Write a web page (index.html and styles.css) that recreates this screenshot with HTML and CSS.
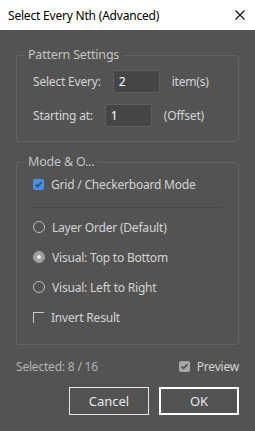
FILE: index.html
```html
<!DOCTYPE html>
<html lang="en">
<head>
    <meta charset="UTF-8">
    <title>Select Every Nth (Advanced)</title>
    <link rel="stylesheet" href="styles.css">
</head>
<body>
    <div class="titlebar">
        <span class="title">Select Every Nth (Advanced)</span>
        <svg class="close" width="10" height="10" viewBox="0 0 10 10">
            <path d="M0.5 0.5 L9.5 9.5 M9.5 0.5 L0.5 9.5" stroke="#111" stroke-width="1.1" fill="none"/>
        </svg>
    </div>

    <div class="content">
        <fieldset class="group">
            <legend>Pattern Settings</legend>
            <div class="field-row">
                <label>Select Every:</label>
                <div class="input">2</div>
                <span>item(s)</span>
            </div>
            <div class="field-row">
                <label>Starting at:</label>
                <div class="input">1</div>
                <span>(Offset)</span>
            </div>
        </fieldset>

        <fieldset class="group mode">
            <legend>Mode &amp; O...</legend>
            <div class="opt first">
                <span class="check on">
                    <svg width="11" height="11" viewBox="0 0 11 11"><path d="M2.5 5.5 L4.5 7.5 L8.5 3.2" stroke="#2b4a78" stroke-width="1.6" fill="none"/></svg>
                </span>
                <span>Grid / Checkerboard Mode</span>
            </div>
            <div class="sep"></div>
            <div class="opt">
                <span class="radio"></span>
                <span>Layer Order (Default)</span>
            </div>
            <div class="opt">
                <span class="radio sel"></span>
                <span>Visual: Top to Bottom</span>
            </div>
            <div class="opt">
                <span class="radio"></span>
                <span>Visual: Left to Right</span>
            </div>
            <div class="opt">
                <span class="check off"></span>
                <span>Invert Result</span>
            </div>
        </fieldset>

        <div class="status">
            <span class="count">Selected: 8 / 16</span>
            <span class="preview">
                <span class="check gray">
                    <svg width="11" height="11" viewBox="0 0 11 11"><path d="M2.5 5.5 L4.5 7.5 L8.5 3.2" stroke="#4a4a4a" stroke-width="1.5" fill="none"/></svg>
                </span>
                <span>Preview</span>
            </span>
        </div>

        <div class="buttons">
            <button class="btn">Cancel</button>
            <button class="btn ok">OK</button>
        </div>
    </div>
</body>
</html>
```

FILE: styles.css
```css
body {
    margin: 0;
    background: #535353;
    font-family: "Noto Sans", "Open Sans", sans-serif;
    font-size: 12px;
    letter-spacing: -0.2px;
    color: #d4d4d4;
}
.titlebar {
    height: 30px;
    background: #fff;
    display: flex;
    align-items: center;
    justify-content: space-between;
    padding: 0 10px 0 8px;
    color: #000;
}
.content {
    padding: 17px 16px 0 16px;
}
.group {
    margin: 0;
    border: 1px solid #646464;
    border-radius: 3px;
    padding: 7px 16px 14px 16px;
}
.group legend {
    margin-left: -9px;
    padding: 0 4px;
    line-height: 16px;
    color: #c4c4c4;
    font-size: 12.5px;
}
.field-row {
    display: flex;
    align-items: center;
    gap: 12px;
    height: 23px;
}
.field-row + .field-row {
    margin-top: 11px;
}
.input {
    width: 40px;
    height: 21px;
    line-height: 21px;
    padding-left: 5px;
    background: #454545;
    border: 1px solid #5f5f5f;
    border-radius: 2px;
    color: #fff;
}
.mode {
    margin-top: 12px;
    padding: 3px 16px 16px 16px;
}
.opt {
    display: flex;
    align-items: center;
    gap: 7px;
    height: 22px;
    margin-top: 8px;
}
.opt.first {
    margin-top: 0;
}
.sep {
    height: 1px;
    background: #474747;
    margin: 12px 0 7px 0;
}
.check {
    width: 11px;
    height: 11px;
    border-radius: 2px;
    display: inline-flex;
}
.check.on {
    background: #4b8fe2;
}
.check.gray {
    background: #a6a6a6;
}
.check.off {
    box-sizing: border-box;
    border-top: 1px solid #c8c8c8;
    border-left: 1px solid #c8c8c8;
    border-radius: 0;
}
.radio {
    width: 10px;
    height: 10px;
    border: 1px solid #bdbdbd;
    border-radius: 50%;
    display: inline-flex;
    align-items: center;
    justify-content: center;
}
.radio.sel {
    background: #a0a0a0;
    border-color: #a0a0a0;
}
.radio.sel::after {
    content: "";
    width: 4px;
    height: 4px;
    border-radius: 50%;
    background: #e8e8e8;
}
.status {
    display: flex;
    align-items: center;
    justify-content: space-between;
    margin-top: 12px;
    height: 18px;
}
.count {
    color: #b4b4b4;
}
.preview {
    display: flex;
    align-items: center;
    gap: 7px;
}
.buttons {
    display: flex;
    justify-content: flex-end;
    gap: 10px;
    margin-top: 12px;
}
.btn {
    width: 80px;
    height: 28px;
    background: #535353;
    border: 1px solid #e6e6e6;
    color: #e8e8e8;
    font-family: inherit;
    font-size: 13px;
    padding: 0;
}
.btn.ok {
    border: 2px solid #fff;
}
```
